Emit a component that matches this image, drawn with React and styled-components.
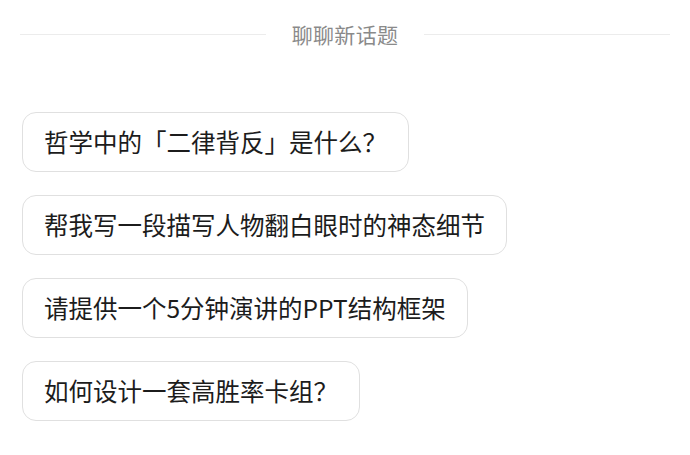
import React from 'react';
import styled, { createGlobalStyle } from 'styled-components';

const GlobalStyle = createGlobalStyle`
  html, body {
    margin: 0;
    padding: 0;
    background: #ffffff;
  }
  body {
    font-family: "Noto Sans CJK SC", "Noto Sans", sans-serif;
  }
`;

const Page = styled.div`
  width: 690px;
  height: 455px;
  box-sizing: border-box;
  padding: 20px 20px 0 20px;
  display: flex;
  flex-direction: column;
`;

const Divider = styled.div`
  display: flex;
  align-items: center;
  gap: 26px;
  height: 28px;

  &::before,
  &::after {
    content: '';
    flex: 1;
    height: 1px;
    background: #ececec;
  }
`;

const DividerLabel = styled.span`
  font-size: 21px;
  line-height: 28px;
  color: #8a8a8a;
  letter-spacing: 0.3px;
`;

const SuggestionList = styled.div`
  display: flex;
  flex-direction: column;
  align-items: flex-start;
  gap: 23px;
  margin-top: 64px;
  padding-left: 2px;
`;

const Suggestion = styled.button`
  display: flex;
  align-items: center;
  height: 60px;
  box-sizing: border-box;
  padding: 0 21px 0 21px;
  border: 1.5px solid #e0e0e0;
  border-radius: 14px;
  background: #ffffff;
  color: #1c1c1c;
  font-family: inherit;
  font-size: 24.5px;
  line-height: 1;
  cursor: pointer;
`;

const suggestions = [
  '哲学中的「二律背反」是什么？',
  '帮我写一段描写人物翻白眼时的神态细节',
  '请提供一个5分钟演讲的PPT结构框架',
  '如何设计一套高胜率卡组？'
];

export default function App() {
  return (
    <>
      <GlobalStyle />
      <Page>
        <Divider>
          <DividerLabel>聊聊新话题</DividerLabel>
        </Divider>
        <SuggestionList>
          {suggestions.map((s) => (
            <Suggestion key={s}>{s}</Suggestion>
          ))}
        </SuggestionList>
      </Page>
    </>
  );
}
